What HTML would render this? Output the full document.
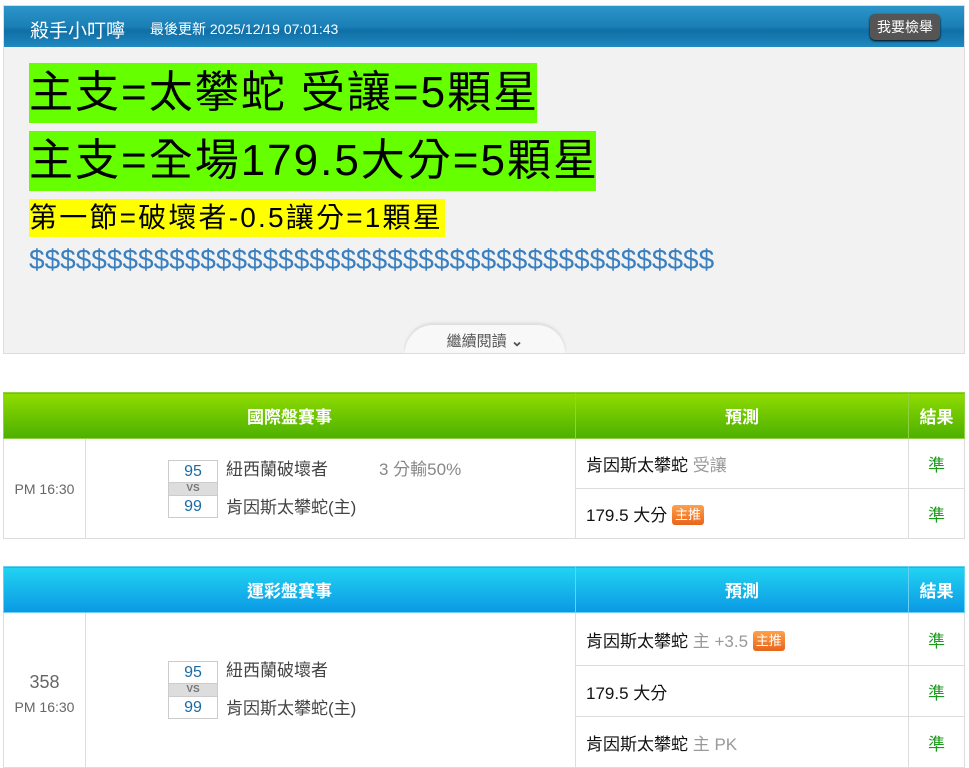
<!DOCTYPE html>
<html><head><meta charset="utf-8"><style>
body{margin:0;background:#fff;font-family:"Liberation Sans","Noto Sans CJK TC",sans-serif;width:969px;height:767px;overflow:hidden;position:relative}
.panel{position:absolute;left:3px;top:5px;width:960px;height:347px;border:1px solid #ddd;background:#f2f2f2}
.hd{height:41px;background:linear-gradient(#2b95c9,#1b7fb6 50%,#0f6fa6 60%,#2088c0);color:#fff;position:relative}
.hd .t{position:absolute;left:26px;top:10px;font-size:19px}
.hd .u{position:absolute;left:146px;top:13px;font-size:14px}
.hd .b{position:absolute;right:24px;top:8px;background:#555;border-radius:5px;font-size:14px;padding:3px 7px;box-shadow:0 1px 2px #000}
.l{position:absolute;left:29px;color:#000;line-height:1;white-space:nowrap}
.g{background:#66ff00}
.more{position:absolute;left:405px;top:325px;width:160px;height:28px;background:#f8f8f8;border-radius:30px 30px 0 0;box-shadow:0 -2px 3px rgba(0,0,0,.1);text-align:center;font-size:15px;color:#555;line-height:34px}
table{position:absolute;left:3px;width:962px;border-collapse:collapse;font-size:17px}
td,th{border:1px solid #ddd;padding:0}
th{color:#fff;font-size:17px;height:45px;border-color:#8fd13e}
.t1 th{background:linear-gradient(#8fdc00,#4caf00)}
.t2 th{background:linear-gradient(#22d3f2,#0a98e4);border-color:#6ad0f2}
.tm{color:#666;font-size:14px;text-align:center}
.sc{display:inline-block;vertical-align:middle;width:48px;border:1px solid #ccc;text-align:center;color:#1a6aa5;font-size:16px}
.sc div{height:21px;line-height:21px}
.sc .vs{height:12px;line-height:12px;font-size:10px;background:#ddd;color:#777;font-weight:bold;border-top:1px solid #ccc;border-bottom:1px solid #ccc}
.nm{display:inline-block;vertical-align:middle;color:#444;margin-left:8px;line-height:38px}
.p{padding-left:10px;color:#111}
.gr{color:#999}
.r{color:#1a9a1a;text-align:center}
.tag{display:inline-block;background:linear-gradient(#ffa04a,#e8641a);color:#fff;font-size:13px;padding:1px 3px;border-radius:3px;line-height:18px;vertical-align:2px}
</style></head><body>
<div class="panel">
<div class="hd"><span class="t">殺手小叮嚀</span><span class="u">最後更新 2025/12/19 07:01:43</span><span class="b">我要檢舉</span></div>
</div>
<div class="l g" style="top:63px;font-size:44px;padding:8px 0;width:508px;letter-spacing:2px">主支=太攀蛇 受讓=5顆星</div>
<div class="l g" style="top:131px;font-size:44px;padding:8px 0;width:567px;letter-spacing:2px">主支=全場179.5大分=5顆星</div>
<div class="l" style="top:199px;font-size:28px;padding:5px 0;background:#ffff00;width:416px;letter-spacing:2.2px">第一節=破壞者-0.5讓分=1顆星</div>
<div class="l" style="top:246px;font-size:28px;color:#3a7fc0">$$$$$$$$$$$$$$$$$$$$$$$$$$$$$$$$$$$$$$$$$$$$</div>
<div class="more">繼續閱讀 <b>⌄</b></div>
<table class="t1" style="top:392px">
<tr><th colspan="2">國際盤賽事</th><th style="width:332px">預測</th><th style="width:55px">結果</th></tr>
<tr style="height:50px"><td rowspan="2" class="tm" style="width:81px">PM 16:30</td>
<td rowspan="2" style="padding-left:82px"><div class="sc"><div>95</div><div class="vs">VS</div><div>99</div></div><div class="nm">紐西蘭破壞者　　　<span style="color:#888">3 分輸50%</span><br>肯因斯太攀蛇(主)</div></td>
<td class="p">肯因斯太攀蛇 <span class="gr">受讓</span></td><td class="r">準</td></tr>
<tr style="height:50px"><td class="p">179.5 大分 <span class="tag">主推</span></td><td class="r">準</td></tr>
</table>
<table class="t2" style="top:566px">
<tr><th colspan="2">運彩盤賽事</th><th style="width:332px">預測</th><th style="width:55px">結果</th></tr>
<tr style="height:53px"><td rowspan="3" class="tm" style="width:81px"><span style="font-size:18px;line-height:34px">358</span><br>PM 16:30</td>
<td rowspan="3" style="padding-left:82px"><div class="sc"><div>95</div><div class="vs">VS</div><div>99</div></div><div class="nm">紐西蘭破壞者<br>肯因斯太攀蛇(主)</div></td>
<td class="p">肯因斯太攀蛇 <span class="gr">主 +3.5</span> <span class="tag">主推</span></td><td class="r">準</td></tr>
<tr style="height:51px"><td class="p">179.5 大分</td><td class="r">準</td></tr>
<tr style="height:51px"><td class="p">肯因斯太攀蛇 <span class="gr">主 PK</span></td><td class="r">準</td></tr>
</table>
</body></html>
